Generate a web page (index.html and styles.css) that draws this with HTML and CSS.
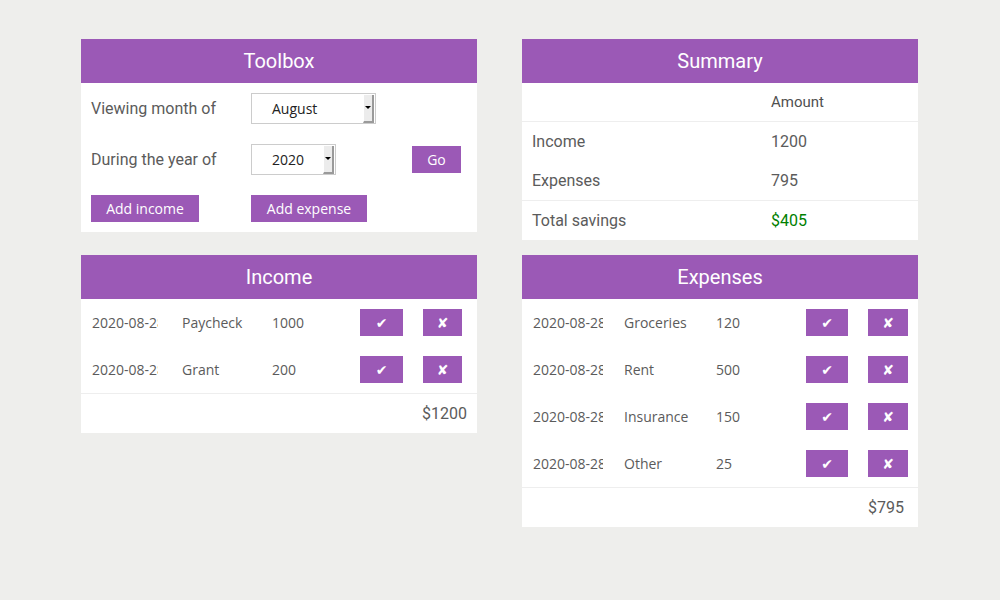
FILE: index.html
```html
<!DOCTYPE html>
<html>
<head>
<meta charset="utf-8">
<link rel="stylesheet" href="styles.css">
</head>
<body>
<div class="page">
  <div class="col col-left">
    <section class="card">
      <h2 class="card-title">Toolbox</h2>
      <div class="toolbox">
        <div class="tb-row tb-row1">
          <span class="label">Viewing month of</span>
          <span class="select sel-month"><span class="sel-val">August</span><span class="sel-arrow"></span></span>
        </div>
        <div class="tb-row tb-row2">
          <span class="label">During the year of</span>
          <span class="select sel-year"><span class="sel-val">2020</span><span class="sel-arrow"></span></span>
          <span class="btn btn-go">Go</span>
        </div>
        <div class="tb-row tb-row3">
          <span class="btn btn-add-inc">Add income</span>
          <span class="btn btn-add-exp">Add expense</span>
        </div>
      </div>
    </section>
    <section class="card">
      <h2 class="card-title">Income</h2>
      <div class="list list-income">
        <div class="item"><span class="c-date">2020-08-28</span><span class="c-name">Paycheck</span><span class="c-amt">1000</span><span class="btn btn-ok">✔</span><span class="btn btn-del">✘</span></div>
        <div class="item"><span class="c-date">2020-08-28</span><span class="c-name">Grant</span><span class="c-amt">200</span><span class="btn btn-ok">✔</span><span class="btn btn-del">✘</span></div>
      </div>
      <div class="total total-income">$1200</div>
    </section>
  </div>
  <div class="col col-right">
    <section class="card">
      <h2 class="card-title">Summary</h2>
      <div class="summary">
        <div class="s-row s-head"><span class="s-label"></span><span class="s-val">Amount</span></div>
        <div class="s-group">
          <div class="s-row"><span class="s-label">Income</span><span class="s-val">1200</span></div>
          <div class="s-row"><span class="s-label">Expenses</span><span class="s-val">795</span></div>
        </div>
        <div class="s-row s-foot"><span class="s-label">Total savings</span><span class="s-val s-green">$405</span></div>
      </div>
    </section>
    <section class="card">
      <h2 class="card-title">Expenses</h2>
      <div class="list list-exp">
        <div class="item"><span class="c-date">2020-08-28</span><span class="c-name">Groceries</span><span class="c-amt">120</span><span class="btn btn-ok">✔</span><span class="btn btn-del">✘</span></div>
        <div class="item"><span class="c-date">2020-08-28</span><span class="c-name">Rent</span><span class="c-amt">500</span><span class="btn btn-ok">✔</span><span class="btn btn-del">✘</span></div>
        <div class="item"><span class="c-date">2020-08-28</span><span class="c-name">Insurance</span><span class="c-amt">150</span><span class="btn btn-ok">✔</span><span class="btn btn-del">✘</span></div>
        <div class="item"><span class="c-date">2020-08-28</span><span class="c-name">Other</span><span class="c-amt">25</span><span class="btn btn-ok">✔</span><span class="btn btn-del">✘</span></div>
      </div>
      <div class="total total-exp">$795</div>
    </section>
  </div>
</div>
</body>
</html>
```
FILE: styles.css
```css
html, body {
  margin: 0;
  padding: 0;
  background: #eeeeec;
}
body {
  font-family: Roboto, "Liberation Sans", sans-serif;
  color: #5b5b5b;
  width: 1000px;
  height: 600px;
  overflow: hidden;
}
.page {
  display: flex;
  align-items: flex-start;
  gap: 45px;
  padding: 39px 0 0 81px;
}
.col {
  width: 396px;
  display: flex;
  flex-direction: column;
}
.col-left { gap: 23px; }
.col-right { gap: 15px; }
.card {
  background: #fff;
}
.card-title {
  margin: 0;
  height: 44px;
  line-height: 45px;
  background: #9b59b6;
  color: #fff;
  text-align: center;
  font-family: Roboto, sans-serif;
  font-weight: 400;
  font-size: 20px;
}
.btn {
  display: inline-flex;
  align-items: center;
  justify-content: center;
  background: #9b59b6;
  color: #fff;
  font-family: "Open Sans", "DejaVu Sans", sans-serif;
  font-size: 14px;
  height: 27px;
  box-sizing: border-box;
}
/* toolbox */
.toolbox {
  padding: 10px;
  height: 149px;
  box-sizing: border-box;
}
.tb-row {
  display: flex;
  align-items: center;
}
.label {
  width: 160px;
  font-size: 16px;
}
.tb-row1 { height: 31px; }
.tb-row2 { height: 31px; margin-top: 20px; }
.tb-row3 { height: 27px; margin-top: 20px; }
.select {
  display: inline-flex;
  align-items: center;
  height: 31px;
  box-sizing: border-box;
  border: 1px solid #cccccc;
  background: #fff;
  font-family: "Open Sans", "DejaVu Sans", sans-serif;
  font-size: 14px;
  color: #222;
}
.sel-month { width: 125px; }
.sel-year { width: 85px; }
.sel-val {
  padding-left: 20px;
  flex: 1;
}
.sel-arrow {
  width: 11px;
  height: 28px;
  margin-right: 1px;
  background: #ececec;
  border-right: 2px solid #9a9a9a;
  border-bottom: 2px solid #9a9a9a;
  border-left: 1px solid #ffffff;
  box-sizing: border-box;
  position: relative;
}
.sel-arrow::after {
  content: "";
  position: absolute;
  left: 1px;
  top: 11px;
  border-left: 3px solid transparent;
  border-right: 3px solid transparent;
  border-top: 3px solid #000;
}
.btn-go {
  width: 49px;
  margin-left: 76px;
}
.btn-add-inc { width: 108px; }
.btn-add-exp { width: 116px; margin-left: 52px; }
/* summary */
.summary {
  font-size: 16px;
}
.s-row {
  display: flex;
  align-items: center;
  height: 39px;
  padding-left: 10px;
}
.s-label { width: 239px; }
.s-head {
  height: 38px;
  font-size: 15px;
  font-weight: 400;
  color: #505050;
  border-bottom: 1px solid #eeeeee;
}
.s-group {
  border-bottom: 1px solid #eeeeee;
}
.s-green { color: #008000; }
/* lists */
.list .item {
  display: grid;
  align-items: center;
  height: 47px;
  padding-left: 11px;
  font-family: "Open Sans", "DejaVu Sans", sans-serif;
  font-size: 14px;
}
.c-date {
  white-space: nowrap;
  overflow: hidden;
}
.list-income .item {
  grid-template-columns: 90px 90px 88px 63px 39px;
}
.list-income .c-date { width: 66px; }
.list-income .btn-ok { width: 43px; }
.list-income .btn-del { width: 39px; }
.list-exp .item {
  grid-template-columns: 91px 92px 90px 62px 40px;
}
.list-exp .c-date { width: 70px; }
.list-exp .btn-ok { width: 42px; }
.list-exp .btn-del { width: 40px; }
.btn-ok, .btn-del {
  font-family: "DejaVu Sans", sans-serif;
  font-size: 14px;
  font-weight: bold;
}
.total {
  border-top: 1px solid #eeeeee;
  height: 39px;
  display: flex;
  align-items: center;
  justify-content: flex-end;
  font-size: 16px;
}
.total-income { padding-right: 10px; }
.total-exp { padding-right: 14px; }
```
